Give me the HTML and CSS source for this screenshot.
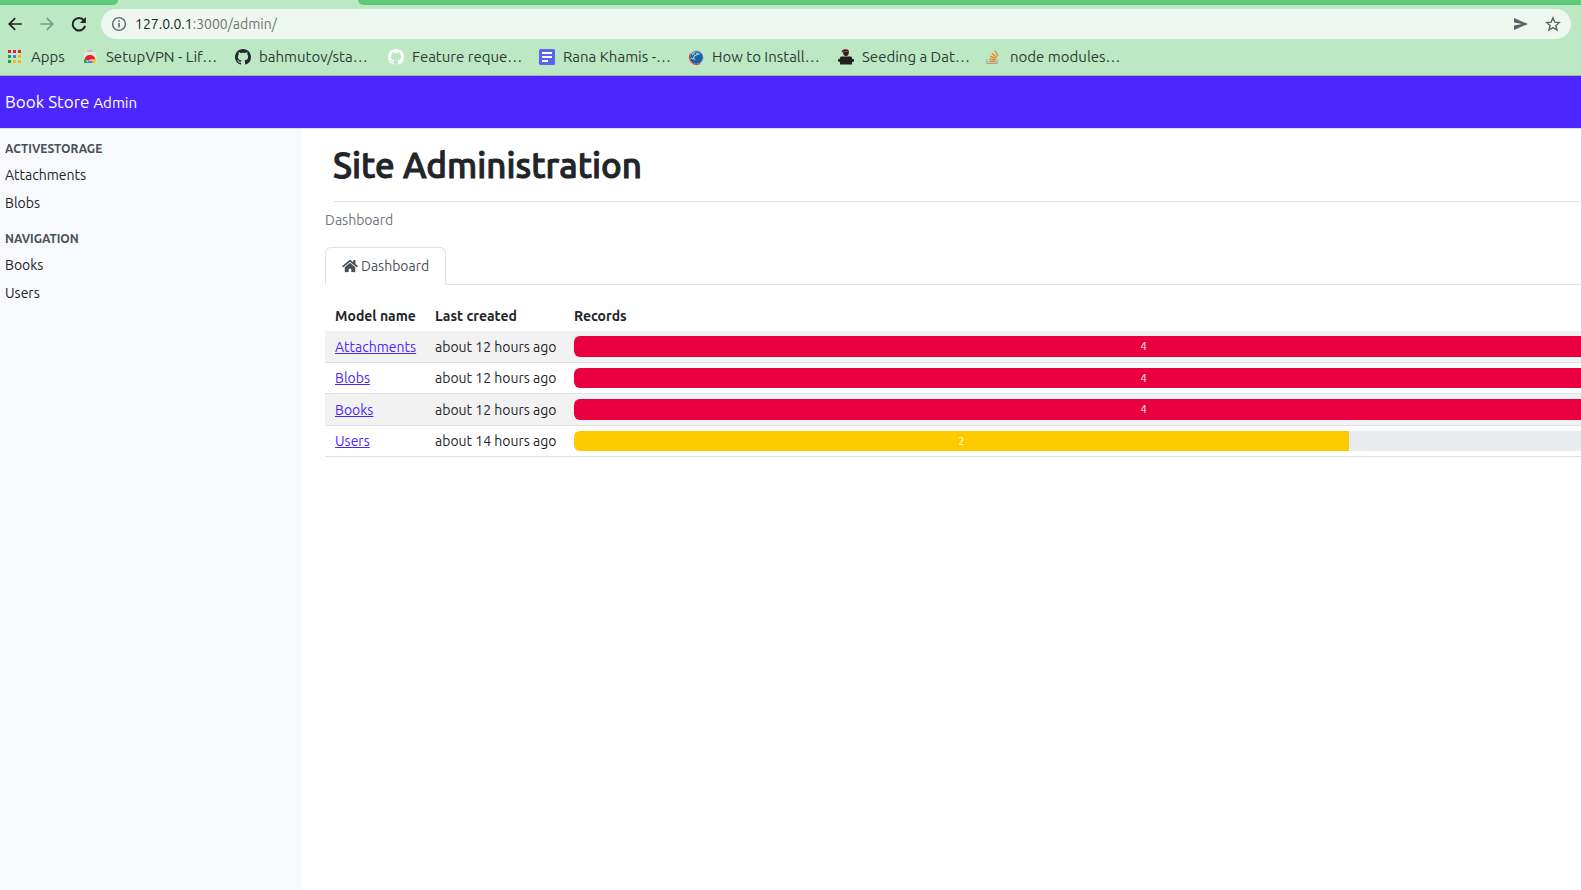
FILE: index.html
```html
<!DOCTYPE html>
<html lang="en">
<head>
<meta charset="utf-8">
<title>Site Administration</title>
<link rel="stylesheet" href="styles.css">
</head>
<body>
<div class="browser">
  <div class="tabstrip"><span class="tab-prev"></span><span class="tab-active"></span><span class="tab-rest"></span></div>
  <div class="toolbar">
    <button class="tool" aria-label="Back"><svg viewBox="0 0 24 24"><path fill="#202124" d="M21 10.900H7l6-6L11.400 3.300 2.700 12l8.700 8.700 1.600-1.600-6-6h14z"/></svg></button>
    <button class="tool" aria-label="Forward"><svg viewBox="0 0 24 24"><path fill="#7d9a84" d="M3 10.900h14l-6-6 1.600-1.600 8.700 8.700-8.700 8.700-1.600-1.600 6-6H3z"/></svg></button>
    <button class="tool" aria-label="Reload"><svg viewBox="0 0 24 24"><path fill="none" stroke="#202124" stroke-width="2.700" d="M18.700 7.200A8.400 8.400 0 1 0 20.100 14.500"/><path fill="#202124" d="M21.200 2.800v8h-8z"/></svg></button>
    <div class="address">
      <svg class="info" viewBox="0 0 16 16"><circle cx="8" cy="8" r="6.400" fill="none" stroke="#5f6368" stroke-width="1.400"/><path fill="#5f6368" d="M7.200 7h1.600v4.500H7.200zM7.200 4.300h1.600v1.600H7.200z"/></svg>
      <a class="url" href="#"><b>127.0.0.1</b>:3000/admin/</a>
      <button class="tool-sm" aria-label="Share"><svg viewBox="0 0 16 16"><path fill="#5f6368" d="M1 2l14 6L1 14V9.400L9 8 1 6.600z"/></svg></button>
      <button class="tool-sm" aria-label="Bookmark"><svg viewBox="0 0 16 16"><path fill="none" stroke="#5f6368" stroke-width="1.400" d="M8 1.800l1.800 4.300 4.600.4-3.500 3 1.100 4.500L8 11.600 4 14l1.100-4.500-3.500-3 4.600-.4z"/></svg></button>
    </div>
  </div>
  <nav class="bookmarks">
    <a class="bm bm-apps" href="#"><svg viewBox="0 0 16 16"><path fill="#ea1c2c" d="M1 1h3v3H1zM6 1h3v3H6zM11 1h3v3h-3z"/><path fill="#12a150" d="M1 6h3v3H1zM1 11h3v3H1z"/><path fill="#4285f4" d="M6 6h3v3H6z"/><path fill="#fbb605" d="M11 6h3v3h-3zM6 11h3v3H6zM11 11h3v3h-3z"/></svg><span>Apps</span></a>
    <a class="bm bm-vpn" href="#"><svg viewBox="0 0 16 16"><path fill="#b9c0bd" d="M5.500 1h5v2h-5z"/><path fill="#dfe6e3" d="M2 3h12v4H2z"/><path fill="#f1f3f4" d="M2 7h12l.5 7h-13z"/><path fill="#e6231e" d="M2.500 10a5.700 5.700 0 0 1 11 .5H8L6 12z"/><path fill="#12a150" d="M2.500 9.500 6 14H2.300a6 6 0 0 1 .2-4.500z"/><path fill="#fbc116" d="M9.500 10.500h4.200A6 6 0 0 1 13.500 14H9z"/><path fill="#4285f4" d="M5.500 14a2.500 2.500 0 0 1 5 0z"/></svg><span>SetupVPN - Lif…</span></a>
    <a class="bm bm-bahmutov" href="#"><svg viewBox="0 0 16 16"><path fill="#24292e" d="M8 0C3.580 0 0 3.580 0 8c0 3.540 2.290 6.530 5.470 7.590.4.070.55-.17.55-.38 0-.19-.01-.82-.01-1.490-2.010.37-2.530-.49-2.690-.94-.09-.23-.48-.94-.82-1.130-.28-.15-.68-.52-.01-.53.63-.01 1.080.58 1.230.82.72 1.210 1.870.87 2.330.66.07-.52.28-.87.51-1.070-1.780-.2-3.640-.89-3.640-3.950 0-.87.31-1.590.82-2.150-.08-.2-.36-1.020.08-2.120 0 0 .67-.21 2.200.82.64-.18 1.320-.27 2-.27s1.360.09 2 .27c1.530-1.040 2.200-.82 2.200-.82.44 1.100.16 1.920.08 2.120.51.56.82 1.270.82 2.150 0 3.070-1.870 3.750-3.650 3.950.29.25.54.73.54 1.480 0 1.070-.01 1.930-.01 2.200 0 .21.15.46.55.38A8.010 8.010 0 0 0 16 8c0-4.420-3.580-8-8-8z"/></svg><span>bahmutov/sta…</span></a>
    <a class="bm bm-feature" href="#"><svg viewBox="0 0 16 16"><path fill="#fff" d="M8 0C3.580 0 0 3.580 0 8c0 3.540 2.290 6.530 5.470 7.590.4.070.55-.17.55-.38 0-.19-.01-.82-.01-1.490-2.010.37-2.530-.49-2.690-.94-.09-.23-.48-.94-.82-1.130-.28-.15-.68-.52-.01-.53.63-.01 1.080.58 1.230.82.72 1.210 1.870.87 2.330.66.07-.52.28-.87.51-1.070-1.780-.2-3.640-.89-3.640-3.950 0-.87.31-1.590.82-2.150-.08-.2-.36-1.020.08-2.120 0 0 .67-.21 2.200.82.64-.18 1.320-.27 2-.27s1.360.09 2 .27c1.530-1.040 2.200-.82 2.200-.82.44 1.100.16 1.920.08 2.120.51.56.82 1.270.82 2.150 0 3.070-1.870 3.750-3.650 3.950.29.25.54.73.54 1.480 0 1.070-.01 1.930-.01 2.200 0 .21.15.46.55.38A8.010 8.010 0 0 0 16 8c0-4.420-3.580-8-8-8z"/></svg><span>Feature reque…</span></a>
    <a class="bm bm-rana" href="#"><svg viewBox="0 0 16 16"><rect width="16" height="16" rx="1.500" fill="#5865f2"/><path fill="#fff" d="M3 3h10v2H3zM3 7h10v2H3zM3 11h6v2H3z"/></svg><span>Rana Khamis -…</span></a>
    <a class="bm bm-how" href="#"><svg viewBox="0 0 16 16"><circle cx="8.500" cy="8.500" r="6.800" fill="#1c5fa8" stroke="#b5c9d6" stroke-width=".8"/><path d="M2.500 4.500a7.200 7.200 0 0 0 9.500 10" fill="none" stroke="#e03a3c" stroke-width="1.100"/><path d="M4 6l3-3M9.500 3.500 8 6l4-1.500M7 6 5.500 9 7 11M3 9l2 1" fill="none" stroke="#a5d3d0" stroke-width="1.200"/></svg><span>How to Install…</span></a>
    <a class="bm bm-seed" href="#"><svg viewBox="0 0 16 16"><path fill="#231f20" d="M4 1.500Q8-1 10.800 1.500V4Q10.500 7 8 7 5.300 7 5.200 4zM3 7.500h10q1 0 1 2l2 1v2l-2 .5v2.500H2V13l-2-.5v-2l2-1q0-2 1-2z"/><path stroke="#c9232d" stroke-width="1.200" d="M3.500 2.600H10.500"/></svg><span>Seeding a Dat…</span></a>
    <a class="bm bm-node" href="#"><svg viewBox="0 0 16 16"><path fill="none" stroke="#9fa6a5" stroke-width="1.200" d="M1 10.500v4h10v-4"/><path stroke="#f48024" stroke-width="1.300" d="M3 12.500h6.500M3.200 9.900l6.400.9M4 7.200l6 2.400M6 4.500l5 4M8.800 1.500l3.200 5.300"/></svg><span>node modules…</span></a>
  </nav>
</div>
<header class="navbar"><a href="#">Book Store <small>Admin</small></a></header>
<div class="layout">
  <nav class="sidebar">
    <h2>ACTIVESTORAGE</h2>
    <a href="#">Attachments</a>
    <a href="#">Blobs</a>
    <h2>NAVIGATION</h2>
    <a href="#">Books</a>
    <a href="#">Users</a>
  </nav>
  <main class="content">
    <div class="content-inner">
      <h1>Site Administration</h1>
      <div class="breadcrumb">Dashboard</div>
      <div class="tabs"><a class="tab" href="#"><svg viewBox="0 0 576 512"><path fill="currentColor" d="M280.370 148.260L96 300.110V464a16 16 0 0 0 16 16l112.060-.29a16 16 0 0 0 15.920-16V368a16 16 0 0 1 16-16h64a16 16 0 0 1 16 16v95.640a16 16 0 0 0 16 16.050L464 480a16 16 0 0 0 16-16V300L295.670 148.260a12.190 12.190 0 0 0-15.300 0zM571.600 251.470L488 182.560V44.050a12 12 0 0 0-12-12h-56a12 12 0 0 0-12 12v72.610L318.470 43a48 48 0 0 0-61 0L4.340 251.470a12 12 0 0 0-1.600 16.900l25.500 31A12 12 0 0 0 45.150 301l235.220-193.740a12.190 12.190 0 0 1 15.300 0L530.900 301a12 12 0 0 0 16.900-1.600l25.500-31a12 12 0 0 0-1.700-16.930z"/></svg><span>Dashboard</span></a></div>
      <table class="models">
        <thead><tr><th class="c-model">Model name</th><th class="c-last">Last created</th><th>Records</th></tr></thead>
        <tbody>
          <tr><td><a href="#">Attachments</a></td><td>about 12 hours ago</td><td><div class="progress"><div class="bar danger" style="width:100%">4</div></div></td></tr>
          <tr><td><a href="#">Blobs</a></td><td>about 12 hours ago</td><td><div class="progress"><div class="bar danger" style="width:100%">4</div></div></td></tr>
          <tr><td><a href="#">Books</a></td><td>about 12 hours ago</td><td><div class="progress"><div class="bar danger" style="width:100%">4</div></div></td></tr>
          <tr><td><a href="#">Users</a></td><td>about 14 hours ago</td><td><div class="progress"><div class="bar warning" style="width:68%">2</div></div></td></tr>
        </tbody>
      </table>
    </div>
  </main>
</div>
</body>
</html>
```
FILE: styles.css
```css
* { box-sizing: border-box; }
body {
  margin: 0;
  min-height: 100vh;
  display: flex;
  flex-direction: column;
  overflow-x: hidden;
  background: #fff;
  color: #212529;
  font: 14px/20px Ubuntu, "Noto Sans", sans-serif;
}
a { color: inherit; text-decoration: none; }
button { padding: 0; border: 0; background: none; display: flex; }
svg { display: block; flex: none; }

.browser { background: #bde8c4; border-bottom: 1px solid #97b99d; }
.tabstrip { display: flex; height: 5px; background: #bde8c4; }
.tab-prev { width: 118px; background: #5fc879; border-bottom-right-radius: 6px; }
.tab-active { width: 240px; }
.tab-rest { flex: 1; background: #5fc879; border-bottom-left-radius: 6px; }
.toolbar { display: flex; align-items: center; gap: 14px; padding: 4px 10px 0 6px; }
.tool svg { width: 18px; height: 18px; }
.address {
  flex: 1;
  display: flex;
  align-items: center;
  height: 30px;
  margin-left: -1px;
  padding: 0 10px;
  border-radius: 15px;
  background: #eef8f0;
}
.info { width: 16px; height: 16px; }
.url { flex: 1; margin-left: 8px; color: #6c7470; }
.url b { font-weight: 400; color: #202124; }
.tool-sm { margin-left: 16px; }
.tool-sm svg { width: 16px; height: 16px; }
.bookmarks { display: flex; height: 36px; padding-left: 7px; font-size: 15px; color: #2d3b32; }
.bm { display: flex; align-items: center; gap: 8px; white-space: nowrap; }
.bm svg { width: 16px; height: 16px; }
.bm-apps { width: 75px; }
.bm-vpn { width: 153px; }
.bm-bahmutov { width: 153px; }
.bm-feature { width: 151px; }
.bm-rana { width: 149px; }
.bm-how { width: 150px; }
.bm-seed { width: 148px; }

.navbar { height: 52px; padding: 0 5px; display: flex; align-items: center; background: #4c26ff; color: #fff; font-size: 17px; }
.navbar small { font-size: 15px; }

.layout { flex: 1; display: flex; border-top: 1px solid #dee2e6; }
.sidebar { width: 301px; flex: none; padding: 10px 5px; background: #f8f9fc; }
.sidebar h2 { margin: 0 0 2px; font-size: 12px; line-height: 20px; font-weight: 700; color: #495057; }
.sidebar a { display: block; padding: 4px 0; }
.sidebar a + h2 { margin-top: 12px; }

.content { flex: 1; min-width: 0; overflow: hidden; padding-left: 24px; }
.content-inner { width: calc(100% + 142px); }
h1 {
  margin: 0 0 0 8px;
  padding: 16px 0;
  border-bottom: 1px solid #dee2e6;
  font-size: 35px;
  line-height: 40px;
  font-weight: 500;
  -webkit-text-stroke: 1px currentColor;
}
.breadcrumb { padding: 8px 0 17px; color: #6c757d; }
.tabs { display: flex; border-bottom: 1px solid #dee2e6; }
.tab { display: flex; align-items: center; gap: 3px; margin-bottom: -1px; padding: 8px 16px; border: 1px solid #dee2e6; border-bottom-color: #fff; border-radius: 6px 6px 0 0; background: #fff; color: #495057; }
.tab svg { width: 16px; height: 14px; }

.models { width: 100%; margin-top: 16px; table-layout: fixed; border-collapse: collapse; }
.models th { padding: 5px 10px; text-align: left; white-space: nowrap; }
.models td { padding: 5px 10px; border-bottom: 1px solid #dee2e6; white-space: nowrap; }
.models tbody tr:nth-child(odd) { background: #f2f2f2; }
.models tbody tr:nth-child(odd) .progress { height: 21px; }
.models a { color: #4c26ff; text-decoration: underline; }
.c-model { width: 100px; }
.c-last { width: 139px; }
.progress { height: 20px; border-radius: 6px; overflow: hidden; background: #e9ecef; }
.bar { height: 100%; text-align: center; color: #fff; font-size: 11px; }
.danger { background: #eb003f; }
.warning { background: #ffc900; }
```
